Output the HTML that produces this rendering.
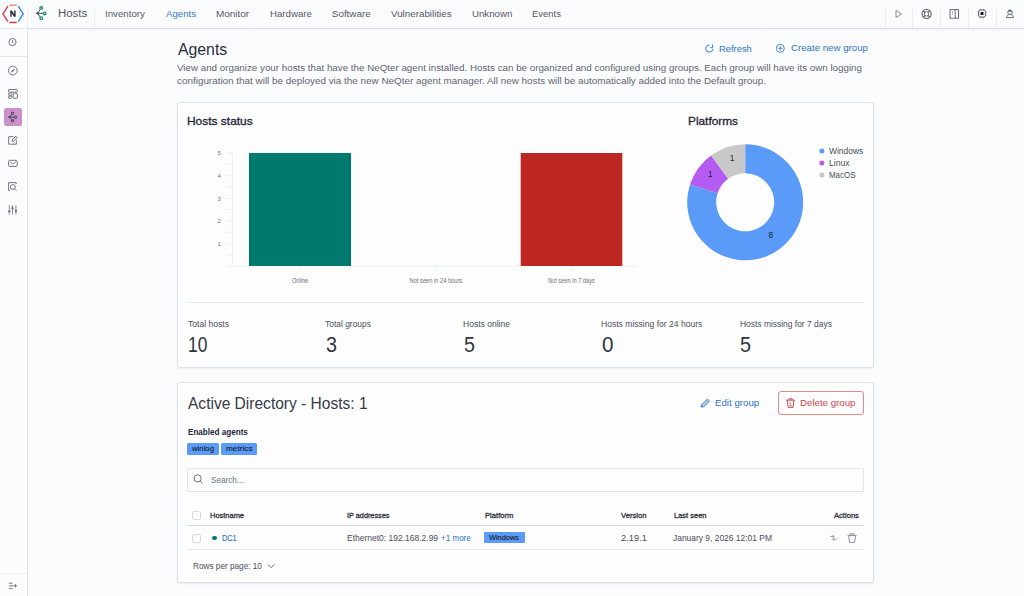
<!DOCTYPE html>
<html><head><meta charset="utf-8"><title>Agents</title>
<style>
html,body{margin:0;padding:0;}
body{width:1024px;height:596px;overflow:hidden;position:relative;background:#fbfcfe;font-family:"Liberation Sans",sans-serif;}
.t{position:absolute;white-space:pre;line-height:1;transform-origin:0 0;}
.a{position:absolute;}
.panel{position:absolute;background:#fdfdfe;border:1px solid #dde2ea;border-radius:2.5px;box-shadow:0 1px 2px rgba(40,60,90,0.08);box-sizing:border-box;}
svg{position:absolute;overflow:visible;}
</style></head><body>
<!-- header -->
<div class="a" style="left:0;top:0;width:1024px;height:28px;background:#fbfcfe;"></div>
<div class="a" style="left:0;top:28px;width:27px;height:1px;background:#e3e7ed;"></div>
<div class="a" style="left:27px;top:28px;width:997px;height:1px;background:#d8dde6;"></div>
<div class="a" style="left:27px;top:29px;width:997px;height:3px;background:linear-gradient(rgba(60,80,110,0.05),rgba(60,80,110,0));"></div>
<div class="a" style="left:27px;top:9px;width:1px;height:19px;background:#eceef2;"></div>
<div class="a" style="left:94px;top:9px;width:1px;height:19px;background:#eceef2;"></div>
<div class="a" style="left:885px;top:9px;width:1px;height:19px;background:#eceef2;"></div>
<div class="a" style="left:912px;top:9px;width:1px;height:19px;background:#eceef2;"></div>
<div class="a" style="left:940px;top:9px;width:1px;height:19px;background:#eceef2;"></div>
<div class="a" style="left:968px;top:9px;width:1px;height:19px;background:#eceef2;"></div>
<div class="a" style="left:996px;top:9px;width:1px;height:19px;background:#eceef2;"></div>
<!-- logo -->
<svg width="28" height="28" style="left:0;top:0" viewBox="0 0 28 28">
 <polyline points="7.9,6.2 3.0,13.9 7.9,21.6" fill="none" stroke="#d8435b" stroke-width="1.5"/>
 <line x1="9.3" y1="5.2" x2="16.7" y2="5.2" stroke="#e8956e" stroke-width="1.5"/>
 <polyline points="18.2,6.2 23.2,13.9 18.2,21.6" fill="none" stroke="#3f8fe8" stroke-width="1.5"/>
 <line x1="9.3" y1="22.5" x2="16.7" y2="22.5" stroke="#d63b47" stroke-width="1.5"/>
 <path d="M10.3 16.8 L10.3 10.6 L11.9 10.6 L14.2 14.3 L14.2 10.6 L15.6 10.6 L15.6 16.8 L14.0 16.8 L11.7 13.1 L11.7 16.8 Z" fill="#23252b"/>
</svg>
<!-- header node icon -->
<svg width="20" height="20" style="left:30px;top:3px" viewBox="30 3 20 20">
 <g stroke="#4a4f5a" stroke-width="1" fill="none">
  <line x1="37.6" y1="13.2" x2="40.2" y2="9.4"/>
  <line x1="37.6" y1="13.2" x2="40.2" y2="17"/>
  <line x1="37.6" y1="13.2" x2="42.8" y2="13.3"/>
 </g>
 <circle cx="37.6" cy="13.2" r="1.2" fill="#4a4f5a"/>
 <g stroke="#178f7c" stroke-width="1.3" fill="none">
  <circle cx="41.2" cy="8.1" r="1.35"/>
  <circle cx="44.6" cy="13.4" r="1.35"/>
  <circle cx="41.2" cy="18.2" r="1.35"/>
 </g>
</svg>
<!-- header right icons -->
<svg width="12" height="12" style="left:893px;top:8px" viewBox="893 8 12 12">
 <path d="M896 10.4 L901.4 14 L896 17.5 Z" fill="none" stroke="#8a8f99" stroke-width="1"/>
</svg>
<svg width="14" height="14" style="left:920px;top:7px" viewBox="920 7 14 14">
 <circle cx="926.6" cy="13.9" r="4.6" fill="none" stroke="#5a5f69" stroke-width="1.1"/>
 <circle cx="926.6" cy="13.9" r="2.2" fill="none" stroke="#5a5f69" stroke-width="0.9"/>
 <g stroke="#5a5f69" stroke-width="1.3">
  <line x1="923.4" y1="10.7" x2="925" y2="12.3"/><line x1="929.8" y1="10.7" x2="928.2" y2="12.3"/>
  <line x1="923.4" y1="17.1" x2="925" y2="15.5"/><line x1="929.8" y1="17.1" x2="928.2" y2="15.5"/>
 </g>
</svg>
<svg width="14" height="14" style="left:948px;top:7px" viewBox="948 7 14 14">
 <rect x="950" y="9.6" width="8.5" height="8.6" fill="none" stroke="#6a6f79" stroke-width="1"/>
 <line x1="955.2" y1="9.6" x2="955.2" y2="18.2" stroke="#6a6f79" stroke-width="1"/>
 <line x1="952.6" y1="11" x2="952.6" y2="15" stroke="#9a9fa9" stroke-width="0.8"/>
</svg>
<svg width="14" height="14" style="left:975px;top:7px" viewBox="975 7 14 14">
 <rect x="978.6" y="10" width="6.8" height="7" rx="1.5" fill="none" stroke="#5a5f69" stroke-width="1"/>
 <rect x="980.5" y="12" width="3" height="3" fill="#1d2030"/>
 <g stroke="#5a5f69" stroke-width="0.8">
  <line x1="977.6" y1="12" x2="978.6" y2="12"/><line x1="977.6" y1="15" x2="978.6" y2="15"/>
  <line x1="985.4" y1="12" x2="986.6" y2="12"/><line x1="985.4" y1="15" x2="986.6" y2="15"/>
  <line x1="980.5" y1="9" x2="980.5" y2="10"/><line x1="983.5" y1="9" x2="983.5" y2="10"/>
  <line x1="980.5" y1="17" x2="980.5" y2="18.4"/><line x1="983.5" y1="17" x2="983.5" y2="18.4"/>
 </g>
</svg>
<svg width="14" height="14" style="left:1003px;top:7px" viewBox="1003 7 14 14">
 <circle cx="1010" cy="12.3" r="2.3" fill="none" stroke="#6a6f79" stroke-width="1"/>
 <path d="M1007.8 11.6 A2.3 2.3 0 0 1 1012.2 11.6 Z" fill="#2a4a80"/>
 <path d="M1006.4 17.6 Q1006.8 14.9 1008.6 14.6 L1011.4 14.6 Q1013.2 14.9 1013.6 17.6 Z" fill="none" stroke="#6a6f79" stroke-width="1"/>
</svg>

<!-- sidebar -->
<div class="a" style="left:0;top:29px;width:27px;height:567px;background:#fbfcfe;"></div>
<div class="a" style="left:27px;top:28px;width:1px;height:568px;background:#e1e5ec;"></div>
<div class="a" style="left:0;top:56px;width:27px;height:1px;background:#e1e5ec;"></div>
<div class="a" style="left:0;top:573px;width:27px;height:1px;background:#eceef2;"></div>
<div class="a" style="left:4px;top:108px;width:18px;height:18px;border-radius:2px;background:#cb90cc;"></div>
<svg width="27" height="200" style="left:0;top:28px" viewBox="0 28 27 200">
 <g fill="none" stroke="#6f747e" stroke-width="1">
  <circle cx="12.5" cy="42.1" r="3.6"/>
  <polyline points="12.5,40.2 12.5,42.3 13.7,43"/>
  <circle cx="12.8" cy="70.6" r="4.4"/>
  <rect x="8.5" y="89.5" width="8.8" height="2.6" rx="0.6"/>
  <rect x="8.5" y="93.1" width="3.3" height="2.2" rx="0.5"/>
  <rect x="8.5" y="96.1" width="3.3" height="2.2" rx="0.5"/>
  <rect x="13.2" y="93.1" width="4.1" height="5.2" rx="0.8"/>
  <path d="M13.4 136.7 L8.7 136.7 L8.7 144.2 L16.3 144.2 L16.3 140.2"/>
  <path d="M12.2 141.4 L12.6 139.4 L15.8 136.2 L17.2 137.6 L14 140.8 Z"/>
  <rect x="8.6" y="160.3" width="8.6" height="6.1" rx="1"/>
  <polyline points="10,161.8 12.9,164.1 15.8,161.8"/>
  <path d="M10.4 190.3 L8.6 190.3 L8.6 182.6 L16.2 182.6 L16.2 184"/>
  <circle cx="12.9" cy="187" r="2.4"/>
  <line x1="14.6" y1="188.8" x2="16.4" y2="190.6"/>
 </g>
 <path d="M11.1 72.3 Q11.6 69.9 14.7 69 Q14.2 71.4 11.1 72.3 Z" fill="#6f747e" stroke="#6f747e" stroke-width="0.5"/>
 <g stroke="#7a7f88" stroke-width="0.9">
  <line x1="9.3" y1="205.2" x2="9.3" y2="214.6"/><line x1="12.5" y1="205.2" x2="12.5" y2="214.6"/><line x1="15.9" y1="205.2" x2="15.9" y2="214.6"/>
 </g>
 <g fill="#6f747e">
  <rect x="8.1" y="210.3" width="2.4" height="2" rx="0.6"/>
  <rect x="11.3" y="207.3" width="2.4" height="2" rx="0.6"/>
  <rect x="14.7" y="209.7" width="2.4" height="2" rx="0.6"/>
 </g>
 <!-- active node icon -->
 <g stroke="#4a4450" stroke-width="0.9" fill="none">
  <line x1="9.6" y1="117" x2="12.2" y2="114"/>
  <line x1="9.6" y1="117" x2="12.2" y2="120.2"/>
  <line x1="9.6" y1="117" x2="14.2" y2="117.1"/>
 </g>
 <g stroke="#57505c" stroke-width="1.1" fill="none">
  <circle cx="12.5" cy="113.3" r="1.15"/>
  <circle cx="15.4" cy="117.2" r="1.15"/>
  <circle cx="12.5" cy="120.8" r="1.15"/>
 </g>
 <circle cx="9.6" cy="117" r="1.2" fill="#4a4450"/>
</svg>
<svg width="27" height="23" style="left:0;top:573px" viewBox="0 573 27 23">
 <g stroke="#6d727c" stroke-width="0.9">
  <line x1="8.8" y1="583.2" x2="12.6" y2="583.2"/>
  <line x1="8.8" y1="585.8" x2="15.6" y2="585.8"/>
  <line x1="8.8" y1="588.4" x2="12.6" y2="588.4"/>
 </g>
 <path d="M15 583.8 L17 585.8 L15 587.8 Z" fill="#6d727c"/>
</svg>

<!-- page header icons -->
<svg width="12" height="12" style="left:703px;top:42px" viewBox="703 42 12 12">
 <path d="M709.6 45 A3.6 3.6 0 1 0 712.9 48.9" fill="none" stroke="#3f80c8" stroke-width="1"/>
 <path d="M712.6 44.6 L712.6 47.7 L710.2 47.7" fill="none" stroke="#3f80c8" stroke-width="1"/>
</svg>
<svg width="12" height="12" style="left:774px;top:42px" viewBox="774 42 12 12">
 <circle cx="780.3" cy="48.3" r="4" fill="none" stroke="#3a7cc4" stroke-width="0.9"/>
 <line x1="778.1" y1="48.3" x2="782.5" y2="48.3" stroke="#3a7cc4" stroke-width="0.9"/>
 <line x1="780.3" y1="46.1" x2="780.3" y2="50.5" stroke="#3a7cc4" stroke-width="0.9"/>
</svg>

<!-- panel 1 -->
<div class="panel" style="left:177px;top:102px;width:697px;height:266px;"></div>
<svg width="1024" height="596" style="left:0;top:0" viewBox="0 0 1024 596">
 <!-- bar chart axes -->
 <g stroke="#e9ebef" stroke-width="0.8">
  <line x1="232.5" y1="153" x2="232.5" y2="266"/>
  <line x1="226" y1="266" x2="638" y2="266"/>
  <line x1="226" y1="153.2" x2="232.5" y2="153.2"/>
  <line x1="226" y1="164.5" x2="232.5" y2="164.5"/>
  <line x1="226" y1="175.8" x2="232.5" y2="175.8"/>
  <line x1="226" y1="187.1" x2="232.5" y2="187.1"/>
  <line x1="226" y1="198.4" x2="232.5" y2="198.4"/>
  <line x1="226" y1="209.7" x2="232.5" y2="209.7"/>
  <line x1="226" y1="221" x2="232.5" y2="221"/>
  <line x1="226" y1="232.3" x2="232.5" y2="232.3"/>
  <line x1="226" y1="243.6" x2="232.5" y2="243.6"/>
  <line x1="226" y1="254.9" x2="232.5" y2="254.9"/>
  <line x1="300.2" y1="266" x2="300.2" y2="271.6"/>
  <line x1="436" y1="266" x2="436" y2="271.6"/>
  <line x1="571.8" y1="266" x2="571.8" y2="271.6"/>
 </g>
 <rect x="249" y="153" width="102" height="113" fill="#007a6e"/>
 <rect x="520.7" y="153" width="101.6" height="113" fill="#bd2721"/>
 <g font-family="Liberation Sans" font-size="6" fill="#6b6f78" text-anchor="middle">
  <text x="219.2" y="155.3">5</text>
  <text x="219.2" y="177.9">4</text>
  <text x="219.2" y="200.5">3</text>
  <text x="219.2" y="223.1">2</text>
  <text x="219.2" y="245.7">1</text>
 </g>
 <g font-family="Liberation Sans" font-size="6.3" fill="#6b6f78">
  <text x="292" y="282.9" textLength="16.2" lengthAdjust="spacingAndGlyphs">Online</text>
  <text x="409.6" y="282.9" textLength="52.6" lengthAdjust="spacingAndGlyphs">Not seen in 24 hours</text>
  <text x="548" y="282.9" textLength="46.8" lengthAdjust="spacingAndGlyphs">Not seen in 7 days</text>
 </g>
 <!-- donut -->
 <g transform="translate(745.2 202.3)">
  <path d="M0.00 -58.00 A58 58 0 1 1 -55.16 -17.92 L-27.58 -8.96 A29 29 0 1 0 0.00 -29.00 Z" fill="#5a9bfa"/>
  <path d="M-55.16 -17.92 A58 58 0 0 1 -34.09 -46.92 L-17.05 -23.46 A29 29 0 0 0 -27.58 -8.96 Z" fill="#b45cf2"/>
  <path d="M-34.09 -46.92 A58 58 0 0 1 -0.00 -58.00 L-0.00 -29.00 A29 29 0 0 0 -17.05 -23.46 Z" fill="#c8c8c9"/>
 </g>
 <g font-family="Liberation Sans" font-size="8.3" fill="#23252b" text-anchor="middle">
  <text x="732" y="161.3">1</text>
  <text x="710.2" y="177.1">1</text>
  <text x="770.7" y="237.7">8</text>
 </g>
 <circle cx="821.9" cy="150.9" r="2.5" fill="#5a9bfa"/>
 <circle cx="821.9" cy="162.9" r="2.5" fill="#b45cf2"/>
 <circle cx="821.9" cy="174.9" r="2.5" fill="#c8c8c9"/>
 <line x1="187" y1="302.5" x2="864" y2="302.5" stroke="#e6e9ee" stroke-width="1"/>
</svg>

<!-- panel 2 -->
<div class="panel" style="left:177px;top:382px;width:697px;height:201px;"></div>
<!-- edit pencil -->
<svg width="12" height="12" style="left:699px;top:397px" viewBox="699 397 12 12">
 <path d="M701.1 407 L701.6 404.6 L707.4 399 L709.6 401.2 L703.8 406.8 Z" fill="#a9c8ec" stroke="#4a8ad4" stroke-width="0.9"/>
 <path d="M701.1 407 L701.5 405 L703.4 406.7 Z" fill="#2f6fd0"/>
</svg>
<!-- delete button -->
<div class="a" style="left:778px;top:391px;width:86px;height:24px;box-sizing:border-box;border:1px solid #e28a8a;border-radius:3px;"></div>
<svg width="12" height="12" style="left:785px;top:397px" viewBox="785 397 12 12">
 <g fill="none" stroke="#cf4350" stroke-width="1">
  <line x1="786.2" y1="400.2" x2="795" y2="400.2"/>
  <path d="M789 400 L789 398.8 L792.2 398.8 L792.2 400"/>
  <path d="M787.3 400.6 L788.2 407.4 L793 407.4 L793.9 400.6"/>
  <line x1="789.4" y1="403.2" x2="791" y2="403.2"/>
  <line x1="789.6" y1="405.4" x2="791.6" y2="405.4"/>
 </g>
</svg>
<!-- badges -->
<div class="a" style="left:187px;top:443px;width:32px;height:11.5px;background:#5a9bfa;border-radius:1.5px;"></div>
<div class="a" style="left:221px;top:443px;width:35.6px;height:11.5px;background:#5a9bfa;border-radius:1.5px;"></div>
<!-- search box -->
<div class="a" style="left:187px;top:468px;width:677px;height:23.5px;box-sizing:border-box;border:1px solid #e4e7ec;border-bottom-color:#dde1e7;border-radius:2px;background:#fcfdfe;"></div>
<svg width="12" height="12" style="left:192px;top:473px" viewBox="192 473 12 12">
 <circle cx="197.6" cy="478.4" r="3.6" fill="none" stroke="#6d727c" stroke-width="1"/>
 <line x1="200.2" y1="481" x2="202.6" y2="483.4" stroke="#6d727c" stroke-width="1"/>
</svg>
<!-- table -->
<div class="a" style="left:191.5px;top:511px;width:9px;height:9px;box-sizing:border-box;border:1px solid #d6dbe3;border-radius:2px;background:#fff;"></div>
<div class="a" style="left:191.5px;top:534px;width:9px;height:9px;box-sizing:border-box;border:1px solid #d6dbe3;border-radius:2px;background:#fff;"></div>
<div class="a" style="left:187px;top:525px;width:677px;height:1px;background:#d5dbe5;"></div>
<div class="a" style="left:187px;top:549px;width:677px;height:1px;background:#e6e9ee;"></div>
<div class="a" style="left:212.3px;top:535.5px;width:4.8px;height:4.8px;border-radius:50%;background:#007a6e;"></div>
<div class="a" style="left:484px;top:532.3px;width:40.6px;height:11.2px;background:#5a9bfa;border-radius:1px;"></div>
<svg width="10" height="10" style="left:265px;top:561px" viewBox="265 561 10 10">
 <polyline points="268,564.6 271.2,567.6 274.4,564.6" fill="none" stroke="#5a5f69" stroke-width="0.9"/>
</svg>
<!-- action icons -->
<svg width="14" height="14" style="left:826px;top:531px" viewBox="826 531 14 14">
 <g stroke="#8a8f99" stroke-width="0.8" fill="none">
  <line x1="830" y1="536.4" x2="834" y2="536.4"/>
  <polyline points="832.4,534.6 834,536.4 832.4,538"/>
  <line x1="836.8" y1="539.2" x2="832.8" y2="539.2"/>
  <polyline points="834.4,537.6 832.8,539.2 834.4,541"/>
 </g>
</svg>
<svg width="14" height="14" style="left:845px;top:531px" viewBox="845 531 14 14">
 <g fill="none" stroke="#8a8f99" stroke-width="1">
  <line x1="847.6" y1="535.4" x2="856.6" y2="535.4"/>
  <path d="M850.2 535.2 L850.2 533.8 L854 533.8 L854 535.2"/>
  <path d="M848.6 535.8 L849.6 542.4 L854.6 542.4 L855.6 535.8"/>
 </g>
</svg>
<div class="t" style="left:57.80px;top:7.34px;font-size:11.64px;color:#50555f;transform:scaleX(0.984);">Hosts</div>
<div class="t" style="left:105.00px;top:9.02px;font-size:9.90px;color:#535864;transform:scaleX(0.982);">Inventory</div>
<div class="t" style="left:165.60px;top:9.02px;font-size:9.90px;color:#347bc6;transform:scaleX(0.977);">Agents</div>
<div class="t" style="left:216.00px;top:9.02px;font-size:9.90px;color:#535864;transform:scaleX(1.006);">Monitor</div>
<div class="t" style="left:269.70px;top:9.02px;font-size:9.90px;color:#535864;transform:scaleX(0.979);">Hardware</div>
<div class="t" style="left:331.80px;top:9.02px;font-size:9.90px;color:#535864;">Software</div>
<div class="t" style="left:391.10px;top:9.02px;font-size:9.90px;color:#535864;transform:scaleX(0.992);">Vulnerabilities</div>
<div class="t" style="left:471.80px;top:9.02px;font-size:9.90px;color:#535864;transform:scaleX(0.979);">Unknown</div>
<div class="t" style="left:532.30px;top:9.02px;font-size:9.90px;color:#535864;transform:scaleX(0.958);">Events</div>
<div class="t" style="left:177.50px;top:41.16px;font-size:16.05px;color:#2a2f3b;transform:scaleX(0.985);">Agents</div>
<div class="t" style="left:177.30px;top:62.74px;font-size:9.52px;color:#5f6571;transform:scaleX(1.028);">View and organize your hosts that have the NeQter agent installed. Hosts can be organized and configured using groups. Each group will have its own logging</div>
<div class="t" style="left:177.30px;top:76.49px;font-size:9.58px;color:#5f6571;transform:scaleX(1.032);">configuration that will be deployed via the new NeQter agent manager. All new hosts will be automatically added into the Default group.</div>
<div class="t" style="left:719.00px;top:44.44px;font-size:9.87px;color:#2f74c0;transform:scaleX(0.949);">Refresh</div>
<div class="t" style="left:790.90px;top:43.41px;font-size:9.79px;color:#2f74c0;transform:scaleX(0.989);">Create new group</div>
<div class="t" style="left:186.90px;top:116.33px;font-size:11.42px;color:#1d2433;-webkit-text-stroke:0.3px #1d2433;transform:scaleX(1.047);">Hosts status</div>
<div class="t" style="left:688.20px;top:116.39px;font-size:11.35px;color:#1d2433;-webkit-text-stroke:0.3px #1d2433;transform:scaleX(1.043);">Platforms</div>
<div class="t" style="left:829.30px;top:146.53px;font-size:9.30px;color:#494e59;transform:scaleX(0.907);">Windows</div>
<div class="t" style="left:187.50px;top:320.96px;font-size:8.20px;color:#4a4f5a;transform:scaleX(1.046);">Total hosts</div>
<div class="t" style="left:325.40px;top:320.96px;font-size:8.20px;color:#4a4f5a;transform:scaleX(1.030);">Total groups</div>
<div class="t" style="left:463.10px;top:320.96px;font-size:8.20px;color:#4a4f5a;transform:scaleX(1.042);">Hosts online</div>
<div class="t" style="left:601.30px;top:320.96px;font-size:8.20px;color:#4a4f5a;transform:scaleX(1.046);">Hosts missing for 24 hours</div>
<div class="t" style="left:740.00px;top:320.96px;font-size:8.20px;color:#4a4f5a;transform:scaleX(1.030);">Hosts missing for 7 days</div>
<div class="t" style="left:187.90px;top:333.60px;font-size:22.50px;color:#2f3440;transform:scaleX(0.771);">10</div>
<div class="t" style="left:187.50px;top:395.54px;font-size:16.01px;color:#363b47;transform:scaleX(0.971);">Active Directory - Hosts: 1</div>
<div class="t" style="left:714.80px;top:398.34px;font-size:9.40px;color:#2f74c0;transform:scaleX(1.034);">Edit group</div>
<div class="t" style="left:800.40px;top:398.34px;font-size:9.40px;color:#cf4653;transform:scaleX(1.033);">Delete group</div>
<div class="t" style="left:187.50px;top:427.79px;font-size:8.87px;color:#1d2433;font-weight:700;transform:scaleX(0.914);">Enabled agents</div>
<div class="t" style="left:210.50px;top:476.28px;font-size:9.00px;color:#6a707c;transform:scaleX(0.902);">Search...</div>
<div class="t" style="left:210.30px;top:511.77px;font-size:7.00px;color:#343741;-webkit-text-stroke:0.3px #343741;transform:scaleX(1.066);">Hostname</div>
<div class="t" style="left:347.40px;top:511.77px;font-size:7.00px;color:#343741;-webkit-text-stroke:0.3px #343741;transform:scaleX(1.041);">IP addresses</div>
<div class="t" style="left:484.50px;top:511.77px;font-size:7.00px;color:#343741;-webkit-text-stroke:0.3px #343741;transform:scaleX(1.090);">Platform</div>
<div class="t" style="left:621.40px;top:511.77px;font-size:7.00px;color:#343741;-webkit-text-stroke:0.3px #343741;transform:scaleX(1.088);">Version</div>
<div class="t" style="left:673.50px;top:511.77px;font-size:7.00px;color:#343741;-webkit-text-stroke:0.3px #343741;transform:scaleX(1.071);">Last seen</div>
<div class="t" style="left:834.00px;top:511.77px;font-size:7.00px;color:#343741;-webkit-text-stroke:0.3px #343741;transform:scaleX(1.085);">Actions</div>
<div class="t" style="left:222.00px;top:533.65px;font-size:8.80px;color:#3479c2;-webkit-text-stroke:0.15px #3479c2;transform:scaleX(0.835);">DC1</div>
<div class="t" style="left:346.90px;top:533.75px;font-size:8.80px;color:#4a4f5a;transform:scaleX(0.965);">Ethernet0: 192.168.2.99</div>
<div class="t" style="left:441.40px;top:533.75px;font-size:8.80px;color:#2f74c0;transform:scaleX(0.916);">+1 more</div>
<div class="t" style="left:620.80px;top:533.75px;font-size:8.80px;color:#4a4f5a;transform:scaleX(1.059);">2.19.1</div>
<div class="t" style="left:672.90px;top:533.75px;font-size:8.80px;color:#4a4f5a;transform:scaleX(0.959);">January 9, 2026 12:01 PM</div>
<div class="t" style="left:192.60px;top:562.43px;font-size:8.35px;color:#4a4f5a;transform:scaleX(0.984);">Rows per page: 10</div>
<div class="t" style="left:829.30px;top:158.53px;font-size:9.30px;color:#494e59;transform:scaleX(0.922);">Linux</div>
<div class="t" style="left:829.30px;top:170.53px;font-size:9.30px;color:#494e59;transform:scaleX(0.855);">MacOS</div>
<div class="t" style="left:325.80px;top:333.60px;font-size:22.50px;color:#2f3440;transform:scaleX(0.879);">3</div>
<div class="t" style="left:463.50px;top:333.60px;font-size:22.50px;color:#2f3440;transform:scaleX(0.879);">5</div>
<div class="t" style="left:601.70px;top:333.60px;font-size:22.50px;color:#2f3440;transform:scaleX(0.919);">0</div>
<div class="t" style="left:740.40px;top:333.60px;font-size:22.50px;color:#2f3440;transform:scaleX(0.879);">5</div>
<div class="t" style="left:191.80px;top:445.42px;font-size:7.30px;color:#1a1c22;-webkit-text-stroke:0.12px #1a1c22;transform:scaleX(1.063);">winlog</div>
<div class="t" style="left:225.50px;top:445.42px;font-size:7.30px;color:#1a1c22;-webkit-text-stroke:0.12px #1a1c22;transform:scaleX(1.127);">metrics</div>
<div class="t" style="left:489.40px;top:534.12px;font-size:7.30px;color:#1a1c22;-webkit-text-stroke:0.12px #1a1c22;transform:scaleX(1.010);">Windows</div>
</body></html>
